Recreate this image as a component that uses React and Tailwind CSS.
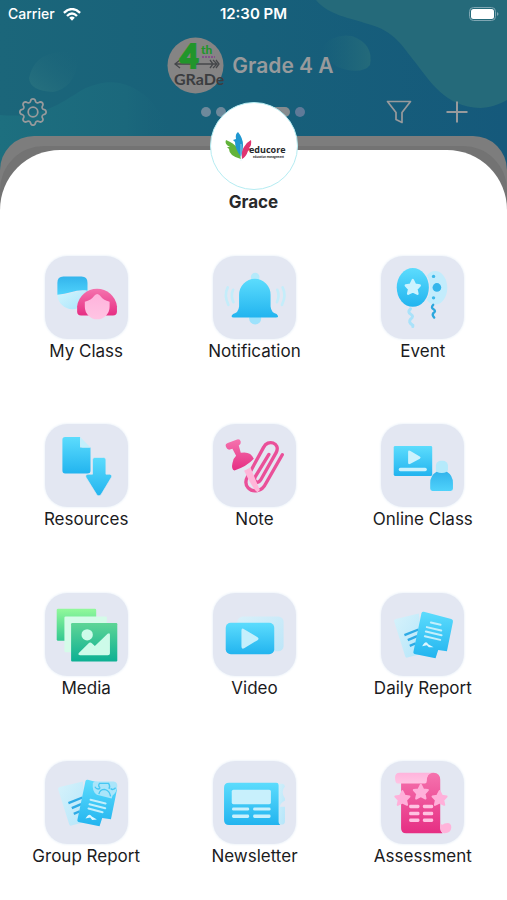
import React from 'react';
import { BsGear } from 'react-icons/bs';

const STAR = 'M0 -22 L7 -8 L21 -6 L11 5 L14 19 L0 12 L-14 19 L-11 5 L-21 -6 L-7 -8 Z';

function Gradients() {
  return (
    <svg className="absolute size-0" aria-hidden="true">
      <defs>
        <linearGradient id="blue" x1="0" y1="0" x2="0" y2="1">
          <stop offset="0" stopColor="#5cdcfd" />
          <stop offset="1" stopColor="#22b4ef" />
        </linearGradient>
        <linearGradient id="sky" x1="0" y1="0" x2="0" y2="1">
          <stop offset="0" stopColor="#33b4ec" />
          <stop offset="1" stopColor="#4fd2fb" />
        </linearGradient>
        <linearGradient id="ice" x1="0" y1="0" x2="1" y2="1">
          <stop offset="0" stopColor="#d3f5fd" />
          <stop offset="1" stopColor="#a9e5fc" />
        </linearGradient>
        <linearGradient id="pink" x1="0" y1="0" x2="0" y2="1">
          <stop offset="0" stopColor="#f573ae" />
          <stop offset="1" stopColor="#e62e83" />
        </linearGradient>
        <linearGradient id="rose" x1="0" y1="0" x2="0" y2="1">
          <stop offset="0" stopColor="#ffb3dc" />
          <stop offset="1" stopColor="#ffc4e3" />
        </linearGradient>
        <linearGradient id="lime" x1="0" y1="0" x2="0" y2="1">
          <stop offset="0" stopColor="#92f99b" />
          <stop offset="1" stopColor="#32c890" />
        </linearGradient>
        <linearGradient id="green" x1="0" y1="0" x2="0" y2="1">
          <stop offset="0" stopColor="#5ed596" />
          <stop offset="1" stopColor="#0cb093" />
        </linearGradient>
      </defs>
    </svg>
  );
}

function ClassIcon() {
  return (
    <>
      <path d="M37 112 C60 124 95 98 127 104 V114 A45 45 0 0 1 37 114 Z" fill="url(#ice)" />
      <path d="M55 61 H109 Q127 61 127 80 V104 C98 98 72 113 37 116 V80 Q37 61 55 61 Z" fill="url(#sky)" />
      <path d="M96 150 A60 60 0 0 1 215 150 V166 Q215 178 203 178 H108 Q96 178 96 166 Z" fill="url(#pink)" />
      <path d="M119 137 Q138 132 148 118 Q156 109 164 118 Q174 132 193 137 V152 A37 37 0 0 1 119 152 Z" fill="url(#rose)" />
    </>
  );
}

function BellIcon() {
  return (
    <>
      <circle cx="126" cy="63" r="13" fill="#b5eafb" />
      <circle cx="126" cy="187" r="18" fill="#9de2fc" />
      <g fill="none" stroke="#c4edfa" strokeWidth="8" strokeLinecap="round">
        <path d="M44 94 Q32 118 46 146" />
        <path d="M60 101 Q52 119 61 138" />
        <path d="M208 94 Q220 118 206 146" />
        <path d="M192 101 Q200 119 191 138" />
      </g>
      <path d="M78 116 A47 48 0 0 1 172 116 V151 Q174 170 190 173 Q200 184 188 184 H62 Q50 182 60 173 Q76 170 78 151 Z" fill="url(#blue)" />
    </>
  );
}

function EventIcon() {
  return (
    <>
      <ellipse cx="162" cy="95" rx="36" ry="50" fill="#c3ecfc" />
      <ellipse cx="95" cy="94" rx="52" ry="62" fill="#e3e7f2" />
      <path d="M88 158 Q78 168 89 174 Q100 180 88 189 Q80 197 95 207 V211" fill="none" stroke="#a9e2fa" strokeWidth="9" strokeLinecap="round" />
      <path d="M156 146 Q148 154 157 159 Q166 165 156 171 Q152 177 159 184" fill="none" stroke="#2ca7dd" strokeWidth="7" strokeLinecap="round" />
      <ellipse cx="95" cy="94" rx="48" ry="58" fill="url(#blue)" />
      <path d={STAR} transform="translate(95 94)" fill="#ccf3ff" stroke="#ccf3ff" strokeWidth="7" strokeLinejoin="round" />
      <circle cx="157" cy="61" r="5" fill="#3cb8ea" />
      <circle cx="167" cy="94" r="13" fill="#35b6ec" />
      <circle cx="157" cy="125" r="5" fill="#3cb8ea" />
    </>
  );
}

function ResourcesIcon() {
  return (
    <>
      <path d="M60 39 H105 V70 H136 V139 Q136 148 128 148 H60 Q52 148 52 139 V47 Q52 39 60 39 Z" fill="url(#blue)" />
      <path d="M105 39 L136 70 H112 Q105 70 105 63 Z" fill="#c3effc" />
      <path
        d="M149 100 H175 Q182 100 182 107 V150 H193 Q202 152 198 160 L168 210 Q161 219 154 210 L123 160 Q119 152 128 150 H142 V107 Q142 100 149 100 Z"
        fill="url(#blue)"
        stroke="#e3e7f2"
        strokeWidth="2"
      />
    </>
  );
}

function NoteIcon() {
  return (
    <>
      <path
        d="M207 92 L157 179 C147 202 119 206 105 191 C96 181 97 168 104 156 L151 70 C163 44 203 56 189 85 L142 168 C135 179 119 172 126 158 L167 91"
        fill="none"
        stroke="#ea5099"
        strokeWidth="10"
        strokeLinecap="round"
      />
      <path d="M93 140 L112 130 L140 197 L133 204 Q122 200 93 140 Z" fill="#ffb6d9" />
      <path d="M39 69 Q35 60 44 57 L72 46 Q81 44 83 53 Q84 60 77 64 L83 86 Q112 80 122 104 Q101 127 64 139 Q54 135 58 117 Q60 103 69 95 L58 74 L48 77 Q41 76 39 69 Z" fill="url(#pink)" />
    </>
  );
}

function OnlineIcon() {
  return (
    <>
      <rect x="38" y="66" width="115" height="89" rx="4" fill="url(#blue)" />
      <path d="M81 84 Q81 77 88 81 L116 97 Q121 100 116 104 L88 119 Q81 123 81 116 Z" fill="#cbf2fd" />
      <rect x="53" y="131" width="84" height="10" rx="5" fill="#c8f1fd" />
      <rect x="164" y="110" width="36" height="40" rx="15" fill="#b5eafb" />
      <path d="M147 177 Q147 154 166 143 Q181 150 197 143 Q215 154 215 177 V193 Q215 200 208 200 H154 Q147 200 147 193 Z" fill="url(#sky)" />
    </>
  );
}

function MediaIcon() {
  return (
    <>
      <rect x="35" y="47" width="118" height="96" rx="4" fill="url(#lime)" />
      <rect x="58" y="70" width="127" height="107" rx="4" fill="#d5fbe9" />
      <rect x="78" y="90" width="138" height="115" rx="3" fill="url(#green)" />
      <circle cx="126" cy="125" r="17" fill="#cdfbe9" />
      <path d="M101 179 L132 149 Q136 146 140 150 L149 158 L187 122 Q194 117 194 125 V181 Q194 186 188 186 H105 Q97 185 101 179 Z" fill="#cdfbe9" />
    </>
  );
}

function VideoIcon() {
  return (
    <>
      <rect x="73" y="70" width="138" height="104" rx="16" fill="url(#ice)" opacity="0.65" />
      <rect x="38" y="89" width="145" height="94" rx="15" fill="url(#blue)" />
      <path d="M85 113 Q85 103 93 108 L133 132 Q139 137 133 141 L93 165 Q85 169 85 160 Z" fill="#c5effc" />
    </>
  );
}

function Pages() {
  return (
    <>
      <path d="M39 84 Q39 79 44 78 L113 61 L128 180 L79 193 Q73 194 72 188 Z" fill="url(#ice)" opacity="0.8" />
      <g stroke="#2eabe6" strokeWidth="7">
        <path d="M70 126 L112 109" />
        <path d="M80 141 L108 129" />
        <path d="M86 158 L104 150" />
      </g>
      <path d="M128 56 L210 78 Q216 80 215 86 L197 174 L171 170 L163 195 L100 182 Q95 180 97 175 L121 60 Q123 55 128 56 Z" fill="url(#blue)" />
    </>
  );
}

function DailyIcon() {
  return (
    <>
      <Pages />
      <g stroke="#c3effc" strokeWidth="6" strokeLinecap="round">
        <path d="M149 88 L178 95" />
        <path d="M137 102 L180 112" />
        <path d="M134 115 L181 126" />
        <path d="M131 129 L177 140" />
      </g>
      <path d="M123 159 Q134 139 141 153 L157 162 L143 162 L137 156 Z" fill="#dcf6ff" />
    </>
  );
}

function GroupIcon() {
  return (
    <>
      <Pages />
      <path d="M143 66 Q146 60 157 61 H205 Q217 63 216 75 Q214 95 202 103 L199 112 L155 101 Q140 92 143 66 Z" fill="#aae5fa" />
      <path d="M165 80 Q157 75 163 67 H190 Q196 76 191 83 M149 77 Q155 87 165 82 M196 82 Q203 89 211 80 M161 99 Q164 85 178 85 Q193 88 196 106" fill="none" stroke="#46c7f3" strokeWidth="4" />
      <g stroke="#c3effc" strokeWidth="6" strokeLinecap="round">
        <path d="M136 116 L181 127" />
        <path d="M133 129 L180 141" />
        <path d="M130 142 L172 153" />
      </g>
      <path d="M121 172 Q132 152 140 166 L155 175 L141 176 L135 169 Z" fill="#dcf6ff" />
    </>
  );
}

function NewsIcon() {
  return (
    <>
      <path d="M185 68 H207 Q214 68 215 76 Q201 92 215 112 V118 Q200 126 200 137 H215 V180 Q215 190 205 190 H185 Z" fill="url(#ice)" opacity="0.8" />
      <path d="M48 65 H189 Q196 65 196 72 V182 Q196 187 201 191 H48 Q33 191 33 176 V80 Q33 65 48 65 Z" fill="url(#blue)" />
      <g fill="#c8f0fc">
        <rect x="56" y="86" width="117" height="43" rx="5" />
        <rect x="57" y="139" width="51" height="9" rx="4" />
        <rect x="120" y="139" width="52" height="9" rx="4" />
        <rect x="57" y="160" width="51" height="10" rx="4" />
        <rect x="120" y="160" width="52" height="10" rx="4" />
      </g>
    </>
  );
}

function AssessmentIcon() {
  return (
    <>
      <path d="M60 50 H137 Q139 35 157 35 Q177 36 177 56 V200 Q177 207 184 216 H75 Q60 216 60 201 Z" fill="url(#pink)" />
      <path d="M155 35 H56 Q42 35 42 49 Q42 67 50 67 H131 Q137 67 137 59 Q137 37 155 35 Z" fill="url(#rose)" />
      <path d="M177 186 Q182 194 190 187 Q210 181 210 199 Q209 216 190 216 Q177 214 177 201 Z" fill="#ffb3da" />
      <g fill="#ffb0da" stroke="#ffb0da" strokeWidth="6" strokeLinejoin="round">
        <path d={STAR} transform="translate(119 93)" />
        <path d={STAR} transform="translate(64 112)" />
        <path d={STAR} transform="translate(175 112)" />
      </g>
      <g fill="#ffc3e2">
        <rect x="84" y="131" width="31" height="10" rx="4" />
        <rect x="125" y="131" width="31" height="10" rx="4" />
        <rect x="84" y="152" width="31" height="10" rx="4" />
        <rect x="125" y="152" width="31" height="10" rx="4" />
        <rect x="84" y="172" width="31" height="10" rx="4" />
        <rect x="125" y="172" width="31" height="10" rx="4" />
      </g>
    </>
  );
}

const menu = [
  { label: 'My Class', icon: ClassIcon },
  { label: 'Notification', icon: BellIcon },
  { label: 'Event', icon: EventIcon },
  { label: 'Resources', icon: ResourcesIcon },
  { label: 'Note', icon: NoteIcon },
  { label: 'Online Class', icon: OnlineIcon },
  { label: 'Media', icon: MediaIcon },
  { label: 'Video', icon: VideoIcon },
  { label: 'Daily Report', icon: DailyIcon },
  { label: 'Group Report', icon: GroupIcon },
  { label: 'Newsletter', icon: NewsIcon },
  { label: 'Assessment', icon: AssessmentIcon },
];

function MenuItem({ icon: Icon, label }) {
  return (
    <button type="button" className="flex aspect-square flex-col items-center text-[#1b1b1d]">
      <span className="size-[83px] rounded-[22px] bg-[#e3e7f2] shadow-[0_0_2px_1px_#f1f6fb]">
        <svg viewBox="0 0 248 248" className="size-full" aria-hidden="true">
          <Icon />
        </svg>
      </span>
      <span className="text-[17px] leading-6 whitespace-nowrap">{label}</span>
    </button>
  );
}

function Backdrop() {
  return (
    <svg viewBox="0 0 507 220" preserveAspectRatio="none" className="absolute inset-x-0 top-0 h-[220px] w-full" aria-hidden="true">
      <defs>
        <linearGradient id="sea" x1="0" y1="0" x2="1" y2="0">
          <stop offset="0" stopColor="#1b667a" />
          <stop offset="0.5" stopColor="#17607a" />
          <stop offset="1" stopColor="#15597b" />
        </linearGradient>
        <linearGradient id="fadeRight" x1="0" y1="1" x2="1" y2="0">
          <stop offset="0" stopColor="#28727f" />
          <stop offset="1" stopColor="#1b647a" stopOpacity="0" />
        </linearGradient>
        <linearGradient id="fadeLeft" x1="0" y1="0" x2="1" y2="0">
          <stop offset="0" stopColor="#1f697b" stopOpacity="0" />
          <stop offset="1" stopColor="#246a7a" />
        </linearGradient>
        <linearGradient id="wave" x1="0" y1="0" x2="1" y2="0">
          <stop offset="0" stopColor="#1d6f7f" />
          <stop offset="0.7" stopColor="#1b687c" />
          <stop offset="1" stopColor="#18617a" stopOpacity="0" />
        </linearGradient>
      </defs>
      <rect width="507" height="220" fill="url(#sea)" />
      <path d="M316 0 C328 15 350 18 368 24 C395 31 402 46 415 62 C430 81 445 107 480 108 C490 108 500 104 507 100 V0 Z" fill="#256a7a" />
      <path d="M322 46 Q335 33 352 36 Q374 44 370 65 Q364 73 347 70 Q325 65 322 46 Z" fill="url(#fadeLeft)" />
      <path d="M29 78 Q34 54 60 52 Q80 50 78 62 Q74 88 53 92 Q30 91 29 78 Z" fill="url(#fadeRight)" />
      <path d="M0 115 C42 119 62 102 82 90 C108 77 128 81 148 98 C158 108 170 128 180 137 V220 H0 Z" fill="url(#wave)" />
    </svg>
  );
}

function StatusBar() {
  return (
    <div className="grid h-7 grid-cols-3 items-center px-2 text-sm font-medium text-white">
      <span className="flex items-center gap-2">
        Carrier
        <svg viewBox="0 0 18 13" className="h-[13px] w-[18px]" aria-hidden="true">
          <g fill="none" stroke="white" strokeWidth="2.4">
            <path d="M0.9 4.8 Q9 -2.6 17.1 4.8" />
            <path d="M4 8 Q9 3.2 14 8" />
          </g>
          <path d="M6.2 9.8 Q9 7.4 11.8 9.8 L9 12.8 Z" fill="white" />
        </svg>
      </span>
      <span className="text-center text-[15px] font-semibold">12:30 PM</span>
      <svg viewBox="0 0 30 14" className="h-3.5 w-[30px] justify-self-end" aria-hidden="true">
        <rect x="0.5" y="0.5" width="26" height="13" rx="4" fill="none" stroke="#7fa6b3" />
        <rect x="2" y="2" width="23" height="10" rx="2.5" fill="white" />
        <path d="M28 5 Q31 7 28 9 Z" fill="#7fa6b3" />
      </svg>
    </div>
  );
}

function GradeBadge() {
  return (
    <svg viewBox="0 0 57 57" className="size-[57px]" role="img" aria-label="4th Grade">
      <circle cx="28.5" cy="28.5" r="28" fill="#858484" />
      <path d="M8 27 H50 M13 23 L8 27 L13 31 M43 23 L46 27 L43 31 M46 23 L50 27 L46 31 M49 23 L52 27 L49 31" fill="none" stroke="#45474a" strokeWidth="1.3" />
      <text fontFamily="Lato, sans-serif" fontWeight="900" fill="#21952b">
        <tspan x="13" y="31" fontSize="32" stroke="#21952b" strokeWidth="2">4</tspan>
        <tspan x="34" y="17" fontSize="12">th</tspan>
      </text>
      <path d="M35 20 H48" stroke="#84408a" strokeWidth="1.5" strokeDasharray="2 1" />
      <text x="7" y="48" fontFamily="Lato, sans-serif" fontWeight="700" fontSize="16" fill="#3b3d40">GRaDe</text>
    </svg>
  );
}

function Header() {
  return (
    <header className="relative h-[136px] text-[#989a9c]">
      <StatusBar />
      <div className="mt-[9px] flex items-center justify-center gap-2 pr-1.5">
        <GradeBadge />
        <h1 className="text-[21px] leading-7 font-semibold">Grade 4 A</h1>
      </div>
      <div className="mt-1 grid grid-cols-3 items-center px-[19px]">
        <button type="button" aria-label="Settings" className="w-fit">
          <BsGear className="size-7" />
        </button>
        <div className="flex items-center justify-center gap-[5px]">
          <span className="size-2.5 rounded-full bg-[#6e899b]" />
          <span className="size-2.5 rounded-full bg-[#6e899b]" />
          <span className="size-2.5 rounded-full bg-[#6e899b]" />
          <span className="size-2.5 rounded-full bg-[#6e899b]" />
          <span className="h-2.5 w-[29px] rounded-full bg-[#868b8e]" />
          <span className="size-2.5 rounded-full bg-[#5f7a98]" />
        </div>
        <div className="flex items-center justify-end gap-[34px] pr-5">
          <button type="button" aria-label="Filter">
            <svg viewBox="0 0 26 26" className="size-[26px]" fill="none" stroke="currentColor" strokeWidth="1.7" strokeLinejoin="round">
              <path d="M1.5 2.5 H24.5 L16 13.5 V23.500 L10 20.5 V13.5 Z" />
            </svg>
          </button>
          <button type="button" aria-label="Add">
            <svg viewBox="0 0 22 22" className="size-[22px]" stroke="currentColor" strokeWidth="2">
              <path d="M11 0.5 V21.5 M0.5 11 H21.5" />
            </svg>
          </button>
        </div>
      </div>
    </header>
  );
}

function Avatar() {
  return (
    <div className="relative -mt-12 flex size-22 items-center justify-center rounded-full border border-[#b5ecf2] bg-white">
      <svg viewBox="0 0 64 32" className="h-8 w-16" role="img" aria-label="educore education management">
        <path d="M19 29 Q7 26 7 19 L5 17 L8 17 Q2 14 4 10 Q12 13 15 18 Q18 22 19 29 Z" fill="#62b33a" />
        <path d="M19 27 Q13 19 13 12 L11 10 L14 9 Q13 4 16 2 Q21 8 21 15 Q21 22 19 27 Z" fill="#1f97d0" />
        <path d="M20 29 Q19 21 22 17 Q25 12 29 10 Q30 15 27 18 L29 19 L26 21 Q24 27 20 29 Z" fill="#e03470" />
        <path d="M19 31 V14" stroke="#d7eef7" strokeWidth="0.6" />
        <text x="27" y="23" fontFamily="Open Sans, sans-serif" fontSize="9" fontWeight="700" fill="#27282a">educore</text>
        <text x="62" y="28" textAnchor="end" fontFamily="Open Sans, sans-serif" fontSize="2.6" fontWeight="700" fill="#27282a">education management</text>
      </svg>
    </div>
  );
}

function App() {
  return (
    <div className="relative min-h-screen bg-white font-['Inter',sans-serif]">
      <Gradients />
      <Backdrop />
      <Header />
      <div className="relative rounded-t-[34px] bg-[#7d7d7d] pt-2.5">
        <div className="rounded-t-[44px] bg-[#737373] pt-1">
          <main className="rounded-t-[60px] bg-white">
            <div className="flex flex-col items-center">
              <Avatar />
              <h2 className="text-[17px] leading-6 font-bold text-[#29292b]">Grace</h2>
            </div>
            <nav className="mt-[42px] grid grid-cols-3 pl-0.5">
              {menu.map((item) => (
                <MenuItem key={item.label} {...item} />
              ))}
            </nav>
          </main>
        </div>
      </div>
    </div>
  );
}

export default App;
